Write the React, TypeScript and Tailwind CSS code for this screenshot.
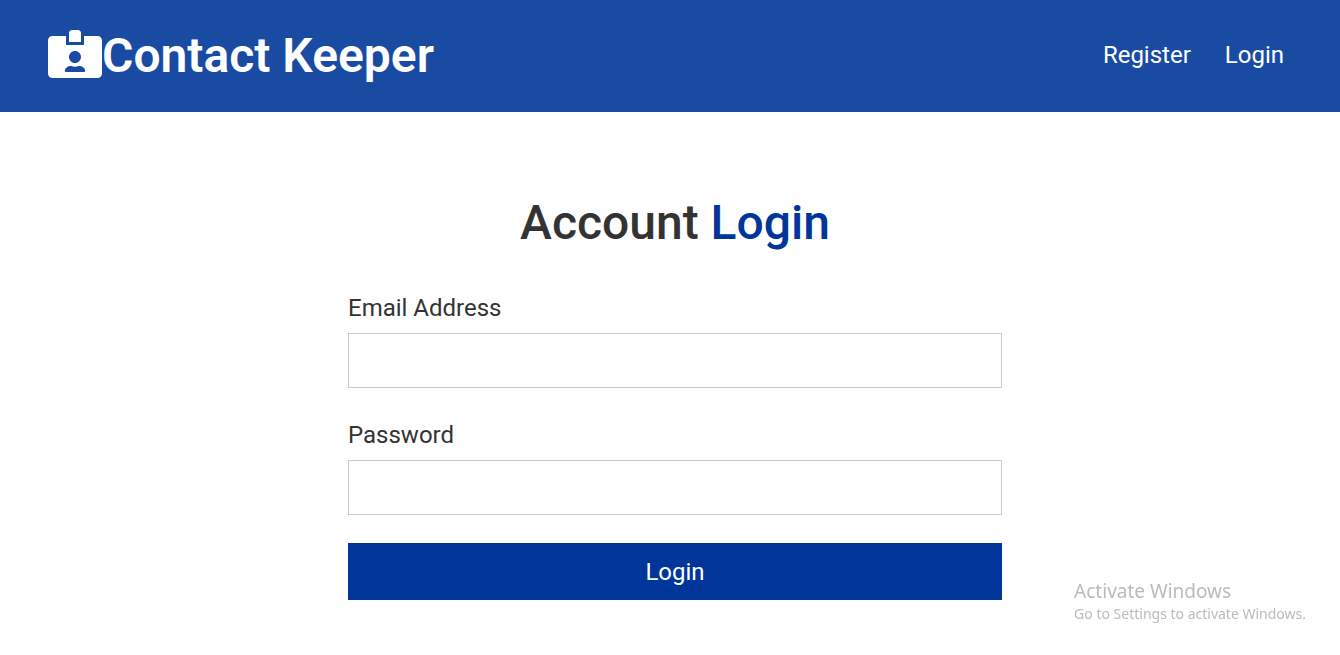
import { FaIdCardAlt } from "react-icons/fa";

function Navbar() {
  return (
    <header className="flex h-28 items-center justify-between bg-[#1a4ba2] pr-14 pb-1 pl-12 text-white">
      <h1 className="flex items-center text-5xl leading-[60px] font-semibold">
        <FaIdCardAlt className="h-12 w-[54px] shrink-0" aria-hidden="true" />
        <span className="pt-1">Contact Keeper</span>
      </h1>
      <nav className="flex gap-[34px] pt-[2px] text-2xl">
        <a href="#register">Register</a>
        <a href="#login">Login</a>
      </nav>
    </header>
  );
}

function Field({ id, label, type }: { id: string; label: string; type: string }) {
  return (
    <div className="mb-7">
      <label htmlFor={id} className="mb-[6px] block text-2xl leading-[38px]">
        {label}
      </label>
      <input id={id} type={type} className="block h-[55px] w-full border border-[#cccccc] px-3 text-2xl outline-none" />
    </div>
  );
}

export default function App() {
  return (
    <div className="min-h-screen bg-white font-['Roboto',sans-serif] text-[#333333]">
      <Navbar />
      <main className="mx-auto w-full max-w-[664px] pt-20 pl-[10px]">
        <h2 className="mb-[35px] text-center text-5xl leading-[62px] font-medium">
          Account <span className="text-[#003699]">Login</span>
        </h2>
        <form onSubmit={(e) => e.preventDefault()}>
          <Field id="email" label="Email Address" type="email" />
          <Field id="password" label="Password" type="password" />
          <button type="submit" className="h-[57px] w-full bg-[#003699] text-2xl text-white">
            Login
          </button>
        </form>
      </main>
      <aside className="fixed right-[34px] bottom-[30px] font-['Noto_Sans',sans-serif] text-[#bbbbbb]">
        <p className="text-[19px] leading-6">Activate Windows</p>
        <p className="text-sm leading-[22px]">Go to Settings to activate Windows.</p>
      </aside>
    </div>
  );
}
